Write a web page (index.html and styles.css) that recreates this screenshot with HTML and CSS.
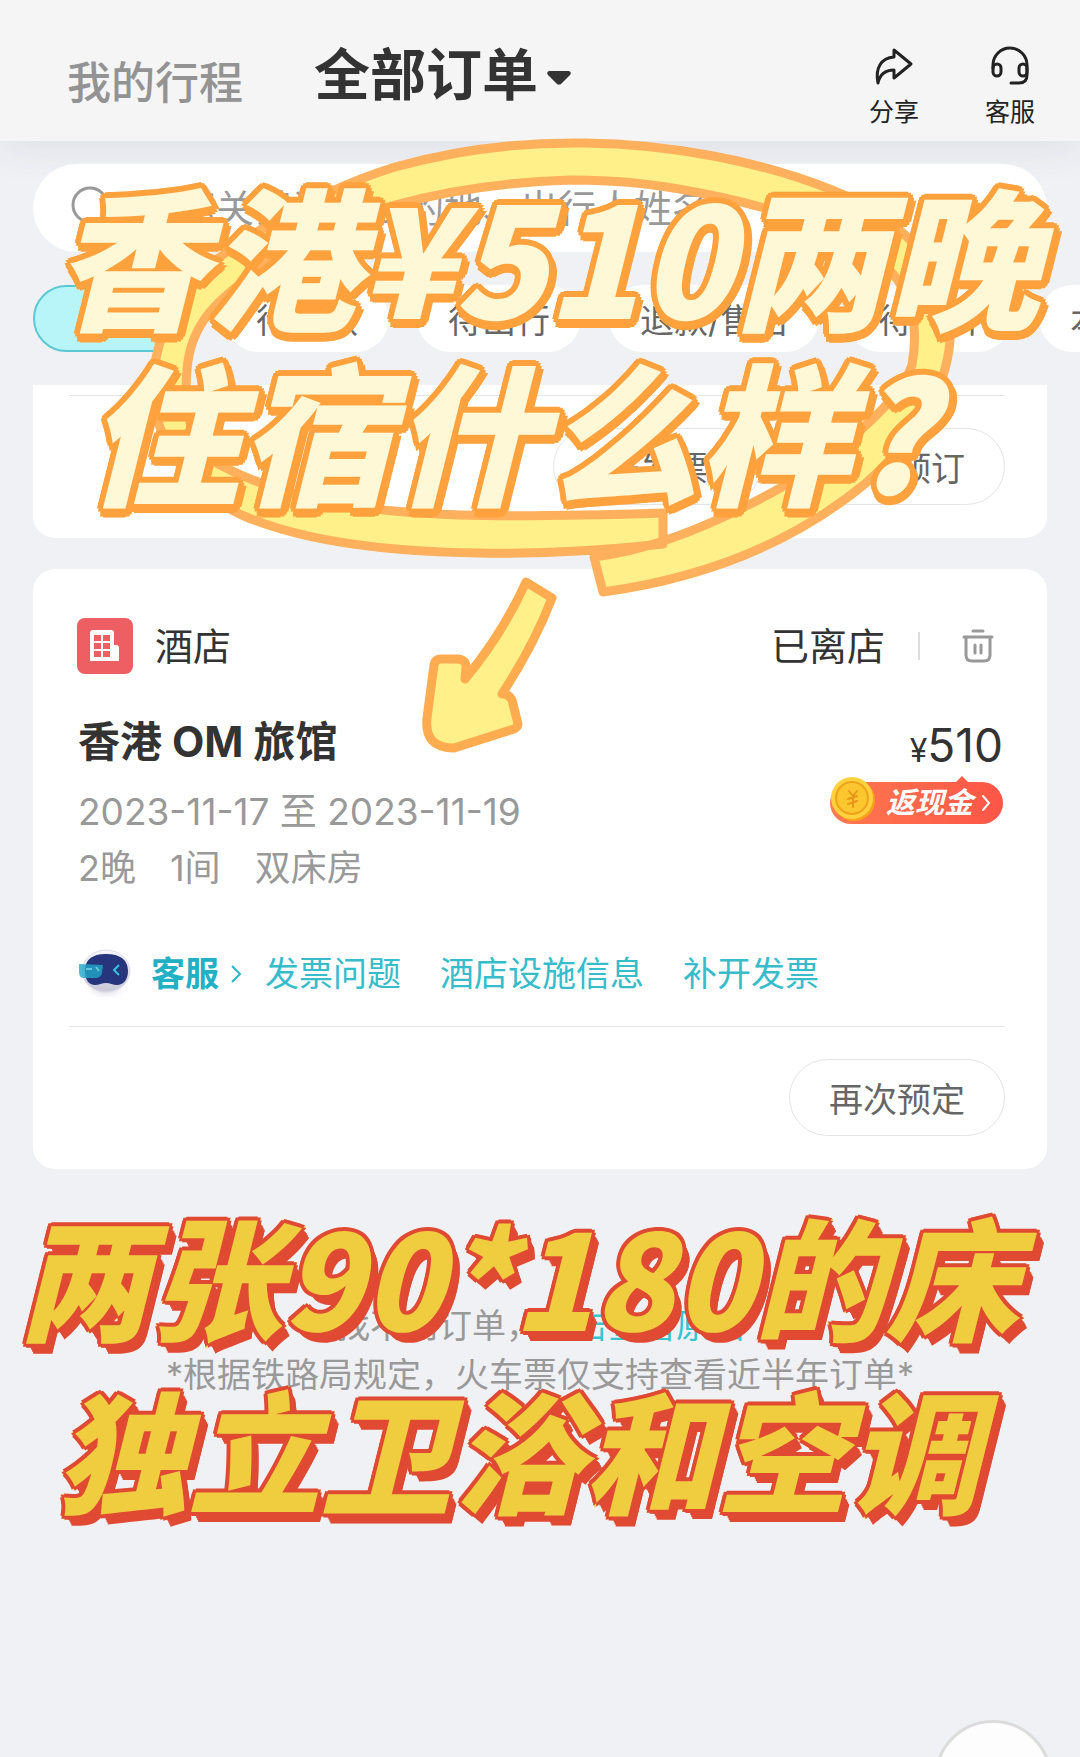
FILE: index.html
```html
<!DOCTYPE html>
<html lang="zh-CN">
<head>
  <meta charset="UTF-8" />
  <meta name="viewport" content="width=device-width, initial-scale=1" />
  <title>全部订单</title>
  <link rel="stylesheet" href="styles.css">
</head>
<body>
  <header class="header">
    <a href="#" class="trip-link">我的行程</a>
    <button type="button" class="title-btn">全部订单
      <svg class="caret" viewBox="0 0 26 14"><path d="M3 0h20q3 1 1 4l-9 9q-2 1-4 0L2 4Q0 1 3 0z" fill="#333"/></svg>
    </button>
    <nav class="actions">
      <a href="#" class="action">
        <svg viewBox="0 0 40 40" fill="none" stroke="#222" stroke-width="3" stroke-linejoin="round" stroke-linecap="round">
          <path d="M20 4l17 14-17 14v-8C11 24 6 28 4 37 1 22 7 12 20 11z"/>
        </svg>
        <span>分享</span>
      </a>
      <a href="#" class="action">
        <svg viewBox="0 0 40 40" fill="none" stroke="#222" stroke-width="3" stroke-linecap="round">
          <path d="M3 22v-3a17 17 0 0 1 34 0v10q0 8-8 8h-8"/>
          <rect x="3" y="18" width="8" height="12" rx="4"/>
          <rect x="29" y="18" width="8" height="12" rx="4"/>
        </svg>
        <span>客服</span>
      </a>
    </nav>
  </header>

  <div class="filters">
    <label class="search">
      <svg viewBox="0 0 44 44" fill="none" stroke="#999" stroke-width="3" stroke-linecap="round"><circle cx="19" cy="19" r="17"/><path d="M32 32l8 8"/></svg>
      <input type="text" placeholder="搜索关键词、目的地、出行人姓名" aria-label="搜索订单" />
    </label>
    <div class="tabs">
      <button type="button" class="tab active">全部</button>
      <button type="button" class="tab">待付款</button>
      <button type="button" class="tab">待出行</button>
      <button type="button" class="tab">退款/售后</button>
      <button type="button" class="tab">待评价</button>
      <button type="button" class="tab">本人订单</button>
    </div>
  </div>

  <main class="list">
    <section class="card card-prev">
      <div class="card-foot">
        <button type="button" class="pill">开发票</button>
        <button type="button" class="pill">再次预订</button>
      </div>
    </section>

    <section class="card">
      <div class="card-head">
        <svg class="hotel-icon" viewBox="0 0 56 56">
          <rect width="56" height="56" rx="8" fill="#ee5f63"/>
          <path d="M13 15q0-3 3-3h18q3 0 3 3v12h2q3 0 3 3v13H13z" fill="#fff"/>
          <path d="M17 17h7v6h-7zM26 17h7v6h-7zM17 25h7v6h-7zM26 25h7v6h-7zM17 33h7v6h-7zM26 33h7v6h-7z" fill="#ee5f63"/>
        </svg>
        <span class="kind">酒店</span>
        <span class="status">已离店</span>
        <span class="bar"></span>
        <button type="button" class="trash" aria-label="删除订单">
          <svg viewBox="0 0 32 36" fill="none" stroke="#999" stroke-width="3" stroke-linecap="round">
            <path d="M11 3h10M2 9h28M4 9v18q0 6 6 6h12q6 0 6-6V9M13 17v8M19 17v8"/>
          </svg>
        </button>
      </div>

      <div class="card-body">
        <div class="info">
          <h2>香港 OM 旅馆</h2>
          <p class="dates">2023-11-17 至 2023-11-19</p>
          <p class="room"><span>2晚</span><span>1间</span><span>双床房</span></p>
        </div>
        <div class="price-box">
          <div class="price"><small>¥</small>510</div>
          <a href="#" class="cashback">
            <svg class="coin" viewBox="0 0 46 46">
              <circle cx="24" cy="24" r="21" fill="#f9a21b"/>
              <circle cx="22" cy="22" r="21" fill="#ffd23d"/>
              <circle cx="22" cy="22" r="16" fill="#fcc62f" stroke="#efa31c" stroke-width="2"/>
              <path d="M19 15l4 5 4-5M18 23l9-3M18 28l9-3M23 21v10" fill="none" stroke="#e8961a" stroke-width="2" stroke-linecap="round"/>
            </svg>
            <span>返现金</span>
            <svg class="arrow" viewBox="0 0 10 18"><path d="M2 2l6 7-6 7" fill="none" stroke="#fff" stroke-width="2" stroke-linecap="round"/></svg>
          </a>
        </div>
      </div>

      <div class="service">
        <svg class="robot" viewBox="0 0 54 54">
          <defs>
            <radialGradient id="glow"><stop offset="0" stop-color="#b9b6cf"/><stop offset="1" stop-color="#fff" stop-opacity="0"/></radialGradient>
            <linearGradient id="shell" x1="0" y1="0" x2="0" y2="1"><stop offset="0" stop-color="#f6f6fa"/><stop offset="1" stop-color="#c9c9d8"/></linearGradient>
          </defs>
          <ellipse cx="28" cy="40" rx="24" ry="14" fill="url(#glow)"/>
          <ellipse cx="28" cy="24" rx="24" ry="21" fill="url(#shell)" stroke="#dedee8"/>
          <path d="M7 24C7 10 18 7 28 7s22 3 22 17c0 9-5 14-11 14-4 0-7-2-11-2s-7 2-11 2C11 38 7 33 7 24z" fill="#26357c"/>
          <path d="M1 17l24 1-1 8q-1 5-7 5H6q-5 0-5-6z" fill="#22a9c9" opacity=".8"/>
          <path d="M8 22h6M18 20l3 4" stroke="#7fe3ee" stroke-width="2" opacity=".7"/>
          <path d="M41 18l-5 5 5 5" fill="none" stroke="#35c4de" stroke-width="2"/>
        </svg>
        <a href="#" class="service-main">客服</a>
        <svg class="service-arrow" viewBox="0 0 12 20"><path d="M2 2l8 8-8 8" fill="none" stroke="#2bb5c8" stroke-width="2"/></svg>
        <a href="#">发票问题</a>
        <a href="#">酒店设施信息</a>
        <a href="#">补开发票</a>
      </div>

      <div class="card-foot">
        <button type="button" class="pill">再次预定</button>
      </div>
    </section>
  </main>

  <footer class="tips">
    <p>找不到订单，<a href="#">点击查看原因</a></p>
    <p>*根据铁路局规定，火车票仅支持查看近半年订单*</p>
  </footer>

  <button type="button" class="float-btn" aria-label="更多"></button>

  <!-- stickers on top of the order list -->
  <svg class="doodle" viewBox="0 0 1080 780" fill="#fff08a" stroke-width="9" stroke-linejoin="round">
    <path stroke="#ffb05c" d="M663 544C600 551 540 554 480 553C400 552 310 544 244 516C195 495 153 445 153 385C155 330 182 285 224 254C272 220 330 187 395 167C460 149 520 142 585 143C670 144 760 161 832 190C895 215 948 265 950 320C954 375 925 430 866 483C785 550 690 580 603 592L594 557C660 549 725 519 782 487C850 445 900 400 912 365C920 320 910 280 870 254C830 225 770 208 720 197C660 184 620 180 570 180C505 182 450 190 395 205C340 220 285 245 250 277C210 305 190 330 187 370C183 415 192 448 218 464C290 502 370 512 460 515C530 517 600 515 663 513Z"/>
    <path stroke="#ffac50" d="M526 582L552 598Q534 645 502 694Q508 693 512 700L518 724Q518 727 514 729L454 748Q424 748 427 718L434 665Q435 659 441 659L458 659Q467 660 466 668L465 679Q502 635 526 582Z"/>
  </svg>
  <div class="sticker sticker-top">
    <span>香港¥510两晚</span>
    <span>住宿什么样?</span>
  </div>
  <div class="sticker sticker-bottom">
    <span>两张90*180的床</span>
    <span>独立卫浴和空调</span>
  </div>
</body>
</html>
```
FILE: styles.css
```css
* {
  box-sizing: border-box;
}
body {
  position: relative;
  margin: 0;
  min-height: 100vh;
  overflow: hidden;
  background: #f0f1f5;
  color: #333;
  font-family: Inter, "Noto Sans CJK SC", sans-serif;
  font-size: 34px;
}
a {
  color: inherit;
  text-decoration: none;
}
button {
  padding: 0;
  border: none;
  background: none;
  color: inherit;
  font: inherit;
  cursor: pointer;
}
svg {
  display: block;
  flex: none;
}
.header {
  display: flex;
  align-items: center;
  height: 141px;
  padding: 9px 45px 0 67px;
  background: #f5f5f5;
  box-shadow: 0 4px 40px rgba(60, 60, 80, 0.1);
}
.trip-link {
  margin-top: 10px;
  color: #939393;
  font-size: 44px;
  font-weight: 500;
}
.title-btn {
  display: flex;
  align-items: center;
  gap: 8px;
  margin-left: 71px;
  font-size: 56px;
  font-weight: 700;
  line-height: 64px;
}
.caret {
  width: 26px;
  height: 14px;
  margin-top: 6px;
}
.actions {
  display: flex;
  gap: 66px;
  margin-left: auto;
  margin-top: 26px;
}
.action {
  display: flex;
  flex-direction: column;
  align-items: center;
  gap: 8px;
  color: #222;
  font-size: 25px;
  line-height: 36px;
}
.action svg {
  width: 40px;
  height: 40px;
}

.filters {
  padding: 23px 0 0 33px;
}
.search {
  display: flex;
  align-items: center;
  gap: 25px;
  height: 88px;
  margin-right: 33px;
  padding: 0 38px;
  border-radius: 44px;
  background: #fff;
}
.search svg {
  width: 44px;
  height: 44px;
}
.search input {
  flex: 1;
  min-width: 0;
  padding: 0;
  border: none;
  outline: none;
  background: none;
  font: inherit;
  font-size: 38px;
}
.search input::placeholder {
  color: #999;
}
.tabs {
  display: flex;
  gap: 28px;
  margin-top: 33px;
  overflow: hidden;
}
.tab {
  flex: none;
  height: 67px;
  padding: 0 31px;
  border-radius: 34px;
  background: #fff;
  color: #666;
}
.tab.active {
  min-width: 164px;
  border: 2px solid #5cc8d4;
  background: #b8f5f8;
  color: #1ba9ba;
}

.list {
  display: flex;
  flex-direction: column;
  gap: 31px;
  padding: 33px 33px 0;
}
.card {
  padding: 49px 42px 33px 36px;
  border-radius: 22px;
  background: #fff;
}
.card-prev {
  padding-top: 10px;
  border-radius: 0 0 22px 22px;
}
.card-foot {
  display: flex;
  justify-content: flex-end;
  gap: 28px;
  padding-top: 32px;
  border-top: 1px solid #e6e6e6;
}
.pill {
  min-width: 208px;
  height: 77px;
  padding: 0 39px;
  border: 1px solid #e4e4e4;
  border-radius: 39px;
  color: #666;
}
.card-head {
  display: flex;
  align-items: center;
  padding: 0 11px 0 8px;
  font-size: 38px;
  line-height: 56px;
}
.hotel-icon {
  width: 56px;
  height: 56px;
}
.kind {
  margin-left: 22px;
}
.status {
  margin-left: auto;
}
.bar {
  width: 2px;
  height: 28px;
  margin: 0 42px 0 33px;
  background: #ddd;
}
.trash svg {
  width: 32px;
  height: 36px;
}
.card-body {
  display: flex;
  justify-content: space-between;
  padding: 40px 2px 0 9px;
}
.info h2 {
  margin: 0 0 14px;
  font-size: 42px;
  font-weight: 700;
  line-height: 56px;
}
.info p {
  margin: 0;
  color: #999;
  font-size: 36px;
  line-height: 56px;
}
.info .dates {
  font-size: 37px;
}
.info .room {
  display: flex;
  gap: 34px;
}
.price-box {
  display: flex;
  flex-direction: column;
  align-items: flex-end;
}
.price {
  font-size: 46px;
  line-height: 62px;
}
.price small {
  font-size: 32px;
}
.cashback {
  position: relative;
  display: flex;
  align-items: center;
  gap: 8px;
  height: 42px;
  padding: 0 12px 0 56px;
  border-radius: 21px;
  background: linear-gradient(to right, #ff7a50, #fd5547);
  color: #fff;
  font-size: 29px;
  font-style: italic;
  font-weight: 700;
  line-height: 38px;
}
.cashback::before {
  content: "";
  position: absolute;
  top: -6px;
  right: 34px;
  border: 7px solid transparent;
  border-top: none;
  border-bottom-color: #fd6047;
}
.coin {
  position: absolute;
  top: -6px;
  left: 0;
  width: 46px;
  height: 46px;
}
.arrow {
  width: 10px;
  height: 18px;
}
.service {
  display: flex;
  align-items: center;
  gap: 39px;
  padding: 50px 8px 24px 9px;
  color: #36bccb;
  line-height: 56px;
}
.robot {
  width: 54px;
  height: 54px;
}
.service-main {
  margin-left: -20px;
  color: #22b0c4;
  font-weight: 700;
}
.service-arrow {
  width: 12px;
  height: 20px;
  margin: 0 -16px 0 -28px;
}

.tips {
  padding-top: 132px;
  color: #999;
  line-height: 49px;
  text-align: center;
}
.tips p {
  margin: 0;
}
.tips a {
  color: #36c6cf;
}
.float-btn {
  position: absolute;
  right: 28px;
  bottom: -81px;
  width: 118px;
  height: 118px;
  border: 3px solid #dcdcdc;
  border-radius: 50%;
  background: #fdfdfd;
}

.doodle {
  position: absolute;
  top: 0;
  left: 0;
  width: 100%;
  pointer-events: none;
}
.sticker {
  position: absolute;
  left: 0;
  width: 100%;
  display: flex;
  flex-direction: column;
  align-items: center;
  font-family: "Noto Sans CJK SC", sans-serif;
  font-style: italic;
  font-weight: 900;
  white-space: nowrap;
  paint-order: stroke fill;
  pointer-events: none;
}
/* the stroke fattens the letters, the shadows draw the outline round it */
.sticker-top {
  top: 165px;
  align-items: flex-start;
  padding-left: 54px;
  color: #fff8d6;
  font-size: 153px;
  line-height: 175px;
  -webkit-text-stroke: 6px #fff8d6;
  text-shadow:
    6px 0 #ffa23d, -6px 0 #ffa23d, 0 6px #ffa23d, 0 -6px #ffa23d,
    5px 3px #ffa23d, -5px 3px #ffa23d, 5px -3px #ffa23d, -5px -3px #ffa23d,
    3px 5px #ffa23d, -3px 5px #ffa23d, 3px -5px #ffa23d, -3px -5px #ffa23d,
    6px 6px #ffa23d, 4px 8px #ffa23d, 0 9px #ffa23d, -3px 8px #ffa23d, 8px 3px #ffa23d;
}
.sticker-top span + span {
  margin-left: 32px;
}
.sticker-bottom {
  top: 1187px;
  padding-right: 44px;
  color: #efcd3f;
  font-size: 132px;
  line-height: 173px;
  -webkit-text-stroke: 5px #efcd3f;
  text-shadow:
    4px 0 #e04a33, -4px 0 #e04a33, 0 4px #e04a33, 0 -4px #e04a33,
    3px 3px #e04a33, -3px 3px #e04a33, 3px -3px #e04a33, -3px -3px #e04a33,
    4px 4px #e04a33, 5px 5px #e04a33, 5px 6px #e04a33, 6px 7px #e04a33,
    6px 8px #e04a33, 7px 9px #e04a33, 7px 10px #e04a33;
}
```
